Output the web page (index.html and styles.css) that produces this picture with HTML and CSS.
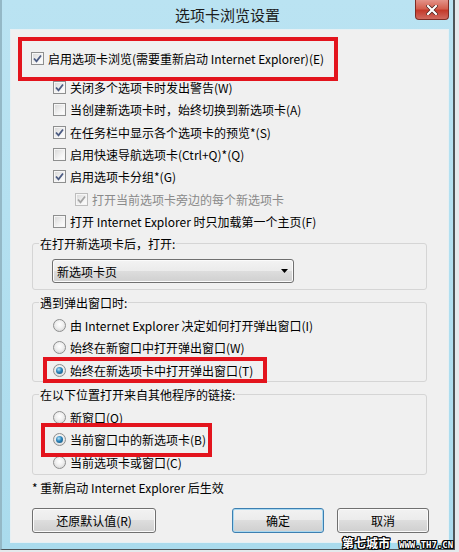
FILE: index.html
```html
<!DOCTYPE html>
<html lang="zh-CN">
<head>
    <meta charset="UTF-8">
    <title>选项卡浏览设置</title>
    <link rel="stylesheet" href="styles.css">
</head>
<body>
    <div class="window">
        <div class="titlebar">
            <div class="title">选项卡浏览设置</div>
            <div class="close">
                <svg width="12" height="10" viewBox="0 0 12 10">
                    <path d="M2 1 L10 9 M10 1 L2 9" stroke="#4a1f1a" stroke-width="3.6" stroke-linecap="square" fill="none"/>
                    <path d="M2 1 L10 9 M10 1 L2 9" stroke="#ffffff" stroke-width="2.2" stroke-linecap="square" fill="none"/>
                </svg>
            </div>
        </div>

        <div class="content">
            <!-- Tabbed browsing on/off -->
            <div class="mark mark-main">
                <div class="row"><span class="cb"><svg viewBox="0 0 11 11"><path d="M2 5.5 L4.5 8.3 L9 2.5"/></svg></span>启用选项卡浏览(需要重新启动 Internet Explorer)(E)</div>
            </div>

            <div class="options">
                <div class="row"><span class="cb"><svg viewBox="0 0 11 11"><path d="M2 5.5 L4.5 8.3 L9 2.5"/></svg></span>关闭多个选项卡时发出警告(W)</div>
                <div class="row"><span class="cb"></span>当创建新选项卡时，始终切换到新选项卡(A)</div>
                <div class="row"><span class="cb"><svg viewBox="0 0 11 11"><path d="M2 5.5 L4.5 8.3 L9 2.5"/></svg></span>在任务栏中显示各个选项卡的预览*(S)</div>
                <div class="row"><span class="cb"></span>启用快速导航选项卡(Ctrl+Q)*(Q)</div>
                <div class="row"><span class="cb"><svg viewBox="0 0 11 11"><path d="M2 5.5 L4.5 8.3 L9 2.5"/></svg></span>启用选项卡分组*(G)</div>
                <div class="row child"><span class="cb"><svg viewBox="0 0 11 11"><path d="M2 5.5 L4.5 8.3 L9 2.5"/></svg></span>打开当前选项卡旁边的每个新选项卡</div>
                <div class="row"><span class="cb"></span>打开 Internet Explorer 时只加载第一个主页(F)</div>
            </div>

            <!-- New tab page -->
            <div class="group group-newtab">
                <div class="group-title">在打开新选项卡后，打开:</div>
                <div class="select">
                    <span>新选项卡页</span>
                    <svg width="7" height="4" viewBox="0 0 7 4"><path d="M0 0 H7 L3.5 4 Z" fill="#000"/></svg>
                </div>
            </div>

            <!-- Popups -->
            <div class="group">
                <div class="group-title">遇到弹出窗口时:</div>
                <div class="list">
                    <div class="row"><span class="rb"></span>由 Internet Explorer 决定如何打开弹出窗口(I)</div>
                    <div class="row"><span class="rb"></span>始终在新窗口中打开弹出窗口(W)</div>
                    <div class="mark mark-popup">
                        <div class="row"><span class="rb on"></span>始终在新选项卡中打开弹出窗口(T)</div>
                    </div>
                </div>
            </div>

            <!-- Links from other programs -->
            <div class="group">
                <div class="group-title">在以下位置打开来自其他程序的链接:</div>
                <div class="list">
                    <div class="row"><span class="rb"></span>新窗口(O)</div>
                    <div class="mark mark-link">
                        <div class="row"><span class="rb on"></span>当前窗口中的新选项卡(B)</div>
                    </div>
                    <div class="row"><span class="rb"></span>当前选项卡或窗口(C)</div>
                </div>
            </div>

            <p class="note">* 重新启动 Internet Explorer 后生效</p>

            <div class="buttons">
                <button class="btn btn-reset">还原默认值(R)</button>
                <button class="btn btn-ok">确定</button>
                <button class="btn">取消</button>
            </div>
        </div>
    </div>

    <div class="watermark">
        <span class="wm-cn">第七城市</span>
        <span class="wm-url">WWW.TH7.CN</span>
    </div>
</body>
</html>
```

FILE: styles.css
```css
/* Reset */
* {
    margin: 0;
    padding: 0;
    box-sizing: border-box;
}

html, body {
    width: 459px;
    height: 552px;
}

body {
    position: relative;
    overflow: hidden;
    background-color: #e4e9ec;
    font-family: "Noto Sans CJK SC", "Noto Sans", sans-serif;
    font-size: 12px;
    color: #000;
}

/* Window frame */
.window {
    width: 455px;
    height: 550px;
    display: flex;
    flex-direction: column;
    padding: 0 4px 6px 8px;
    background: linear-gradient(#bae3f2, #aadbed);
    border-left: 2px solid #94b8c6;
    border-right: 2px solid #4d5559;
    border-bottom: 1px solid #4d5559;
}

.titlebar {
    height: 29px;
    flex: none;
    display: grid;
    grid-template-columns: 1fr auto 1fr;
    margin: 0 -4px 0 -8px;
}

.title {
    grid-column: 2;
    line-height: 29px;
    font-size: 15px;
    color: #1c1c1c;
}

.close {
    grid-column: 3;
    justify-self: end;
    margin-right: 4px;
    width: 34px;
    height: 20px;
    display: flex;
    align-items: center;
    justify-content: center;
    background: linear-gradient(#e49389, #d4604f 45%, #c43a2b 55%, #d06a5f);
    border: 1px solid #7e2c24;
    border-top: none;
    border-radius: 0 0 4px 4px;
}

/* Dialog body */
.content {
    flex: 1;
    display: flex;
    flex-direction: column;
    background-color: #f0f0f0;
    box-shadow: inset 0 0 0 1px #e6f0f4;
}

.row {
    height: 22.33px;
    display: flex;
    align-items: center;
    white-space: nowrap;
}

/* Red annotation boxes */
.mark {
    position: relative;
    display: flex;
    align-items: center;
    border: 4px solid #e3141d;
}

.mark-main {
    width: 320px;
    height: 44px;
    margin: 8px 0 0 8px;
    padding-left: 9px;
}

.mark-popup {
    width: 224px;
    height: 26px;
    margin: -1.83px 0 -1.83px -10px;
    padding-left: 6px;
}

.mark-link {
    width: 171px;
    height: 34px;
    margin: -5.83px 0 -5.83px -12px;
    padding-left: 8px;
}

/* Check boxes and radios */
.cb, .rb {
    width: 13px;
    height: 13px;
    flex: none;
    margin-right: 4px;
    display: flex;
    align-items: center;
    justify-content: center;
    border: 1px solid #8e8f8f;
}

.cb {
    background: linear-gradient(135deg, #d6d6d6, #f3f3f3 60%, #ffffff);
    box-shadow: inset 0 0 0 1px #f6f6f6;
}

.cb svg {
    width: 11px;
    height: 11px;
}

.cb path {
    fill: none;
    stroke: #4b5b82;
    stroke-width: 1.8;
}

.rb {
    border-radius: 50%;
    background: radial-gradient(circle at 50% 40%, #ffffff, #efefef 45%, #cdcdcd);
}

.rb.on::after {
    content: "";
    width: 7px;
    height: 7px;
    border-radius: 50%;
    background: radial-gradient(circle at 40% 35%, #b4e4fa, #2b83b9 45%, #0c4870);
}

.options {
    margin-top: -4.7px;
    padding-left: 43px;
}

.row.child {
    padding-left: 22px;
    color: #8a8a8a;
}

.row.child .cb {
    border-color: #bdbdbd;
}

.row.child .cb path {
    stroke: #a4a4a4;
}

/* Group boxes */
.group {
    margin: 12px 22px 0;
    padding-left: 20px;
    border: 1px solid #d5d5d5;
    border-radius: 3px;
}

.group-newtab {
    margin-top: 10.4px;
    padding-bottom: 6px;
}

.group-title {
    width: fit-content;
    height: 16px;
    line-height: 16px;
    margin: -8px 0 0 -14px;
    padding: 0 1px;
    background-color: #f0f0f0;
}

.list {
    margin-top: 3.25px;
}

.select {
    width: 242px;
    height: 24px;
    margin: 7px 0 0 -1px;
    padding: 0 5px 0 4px;
    display: flex;
    align-items: center;
    justify-content: space-between;
    border: 1px solid #707070;
    border-radius: 3px;
    background: linear-gradient(#f3f3f3, #ebebeb 49%, #dddddd 50%, #d0d0d0);
    box-shadow: inset 0 0 0 1px #fbfbfb;
}

.note {
    margin: 5px 0 0 22px;
    line-height: 16px;
}

/* Buttons */
.buttons {
    display: flex;
    gap: 13px;
    margin-top: 12px;
    padding: 0 20px 0 22px;
}

.btn {
    width: 92px;
    height: 25px;
    font-family: inherit;
    font-size: 12px;
    color: #000;
    border: 1px solid #707070;
    border-radius: 3px;
    background: linear-gradient(#f2f2f2, #ebebeb 49%, #dddddd 50%, #cfcfcf);
    box-shadow: inset 0 0 0 1px #fbfbfb;
}

.btn-reset {
    width: 124px;
    margin-right: auto;
}

.btn-ok {
    border-color: #3c7fb1;
    box-shadow: inset 0 0 0 1px #a9d8f0;
}

/* Site watermark */
.watermark {
    position: absolute;
    left: 342px;
    top: 535px;
    display: flex;
    align-items: baseline;
    gap: 9px;
    white-space: nowrap;
    color: #fff;
    font-weight: bold;
    text-shadow: 1px 0 0 #000, -1px 0 0 #000, 0 1px 0 #000, 0 -1px 0 #000,
                 1px 1px 0 #000, -1px -1px 0 #000, 1px -1px 0 #000, -1px 1px 0 #000;
}

.wm-cn {
    font-size: 12px;
    line-height: 15px;
}

.wm-url {
    font-family: "DejaVu Sans Mono", monospace;
    font-size: 9px;
    line-height: 15px;
}
```
